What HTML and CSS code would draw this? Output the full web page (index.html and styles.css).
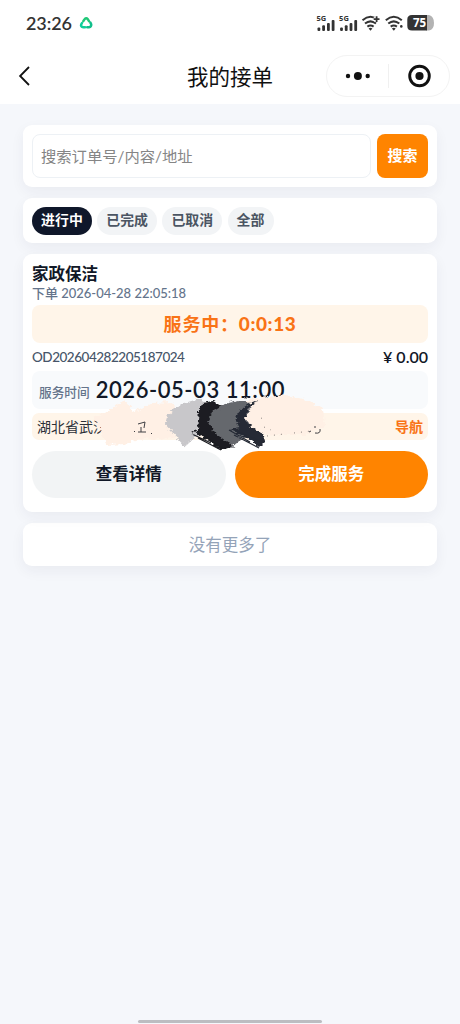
FILE: index.html
```html
<!DOCTYPE html>
<html lang="zh-CN">
<head>
<meta charset="utf-8">
<meta name="viewport" content="width=device-width, initial-scale=1">
<title>我的接单</title>
<link rel="stylesheet" href="styles.css">
</head>
<body>
<header class="top">
  <div class="status">
    <span class="clock">23:26</span>
    <svg class="status-app" width="14" height="14" viewBox="0 0 14 14" fill="none" stroke-width="2.5" stroke-linecap="round">
      <path d="M4.3 5.2 5.3 3.600Q7 1.2 8.900 3.400L10 5.200" stroke="#20c878"/>
      <path d="M11.400 6.6 12.200 8.3Q12.6 10.8 10 11.200H8.2" stroke="#12bf8b"/>
      <path d="M6 11.200H4.300Q1.4 10.8 2.2 8.4L3 7" stroke="#0fcf9a"/>
    </svg>
    <svg class="status-icons" width="120" height="20" viewBox="0 0 120 20">
      <g id="cell" fill="#333">
        <text x="1.500" y="8" class="net">5G</text>
        <rect x="2.500" y="14.500" width="2.8" height="3.500" rx="1"/><rect x="7.2" y="12.3" width="2.8" height="5.7" rx="1"/><rect x="12" y="10" width="2.8" height="8" rx="1"/><rect x="16.700" y="7" width="2.8" height="11" rx="1"/>
      </g>
      <use href="#cell" x="22.6"/>
      <g id="wifi" fill="none" stroke="#333" stroke-width="2">
        <path d="M47.500 7.2Q55.5 .3 63.5 7.2M50 10.6Q55.5 6.1 61 10.6M52.4 13.6Q55.5 11.3 58.6 13.6"/><path d="M53.6 15.4Q55.5 14.2 57.4 15.4L55.5 17.8Z" fill="#333" stroke="none"/>
      </g>
      <path d="M58.7 6.2H64.500M61.6 3.3V9.1" stroke="#fff" stroke-width="4"/>
      <path d="M58.7 6.2H64.500M61.6 3.3V9.1" stroke="#333" stroke-width="1.8"/>
      <use href="#wifi" x="23.3"/>
      <circle cx="86.300" cy="13.4" r="1.3" fill="#333"/>
      <path d="M111 2H114Q119 3.5 119 10T114 17.500H111Z" fill="#b3b3b3"/>
      <path d="M97 2H112V17.500H97Q92.300 17.500 92.300 13V6.500Q92.300 2 97 2Z" fill="#333"/>
      <text x="98" y="14" class="battery">75</text>
    </svg>
  </div>
  <div class="nav">
    <svg class="back" width="14" height="22" viewBox="0 0 14 22" fill="none" stroke="#111" stroke-width="1.8"><path d="M11 2 2.100 11 11 20"/></svg>
    <h1>我的接单</h1>
    <div class="capsule">
      <svg width="26" height="12" viewBox="0 0 26 12" fill="#111"><circle cx="3" cy="6" r="2.200"/><circle cx="12.900" cy="6" r="4"/><circle cx="22.700" cy="6" r="2.200"/></svg>
      <i></i>
      <svg width="24" height="24" viewBox="0 0 24 24"><circle cx="12.500" cy="12" r="9.800" fill="none" stroke="#111" stroke-width="2.900"/><circle cx="12.500" cy="12" r="4.100" fill="#111"/></svg>
    </div>
  </div>
</header>
<main>
  <section class="card search">
    <div class="field">搜索订单号/内容/地址</div>
    <div class="search-btn">搜索</div>
  </section>
  <section class="card tabs">
    <span class="tab active">进行中</span><span class="tab">已完成</span><span class="tab">已取消</span><span class="tab">全部</span>
  </section>
  <section class="card order">
    <h2>家政保洁</h2>
    <p class="created">下单 2026-04-28 22:05:18</p>
    <div class="timer"><span>服务中：</span><b>0:0:13</b></div>
    <div class="number"><span>OD202604282205187024</span><b>¥ 0.00</b></div>
    <div class="appointment"><span>服务时间</span><b>2026-05-03 11:00</b></div>
    <div class="address"><span>湖北省武汉</span><b>导航</b></div>
    <div class="actions"><span class="detail">查看详情</span><span class="finish">完成服务</span></div>
    <svg class="brush" width="250" height="60" viewBox="90 392 250 60">
      <defs>
        <filter id="bristle" x="-10%" y="-10%" width="120%" height="120%">
          <feTurbulence type="fractalNoise" baseFrequency=".16 .32" numOctaves="3" seed="4" result="n"/>
          <feDisplacementMap in="SourceGraphic" in2="n" scale="7" xChannelSelector="R" yChannelSelector="G"/>
        </filter>
      </defs>
      <g filter="url(#bristle)">
        <path fill="#fff0e5" d="M94 415 108 409 124 398 134 410 153 401 172 400 185 420 180 433 160 438 145 436 125 442 107 443 102 432Z"/>
        <path fill="#fff0e5" d="M239 398 286 393 307 398 323 407 325 424 306 433 277 433 239 430Z"/>
        <path fill="#c8c7ca" d="M199 397 179 403 168 412 165 422 172 430 184 444 201 431 210 417 204 399Z"/>
        <path fill="#1b1c21" d="M213 399 202 401 199 408 197 428 191 428 208 438 221 449 229 446 237 438 237 428 230 420 236 410 221 404Z"/>
        <path fill="#65676d" d="M247 397 225 402 213 409 208 419 216 432 226 439 233 444 248 434 257 419 250 405Z"/>
        <path fill="#252a35" d="M259 398 249 402 239 409 235 418 240 426 229 428 247 436 260 446 266 440 264 433 255 426 245 419 247 407Z"/>
        <path fill="#fff0e5" d="M258 402 249 408 245 416 251 424 260 431 276 431 281 400Z"/>
      </g>
      <path fill="none" stroke="#1b1c21" stroke-width="1.200" d="M195 428 222 446M192 432 211 441M198 436 221 448"/>
      <path fill="none" stroke="#252a35" stroke-width="1.200" d="M229 428 250 440M236 429 262 440M234 433 259 446"/>
      <path fill="none" stroke="#c8c7ca" stroke-width="1" d="M176 407 185 401M176 438 185 431M184 445 194 436M184 440 198 428"/>
      <path fill="none" stroke="#65676d" stroke-width="1" d="M219 408 226 402M229 442 241 434M234 443 243 435"/>
      <path fill="none" stroke="#404044" stroke-width="1" d="M138 422 145 420 144 426M138 430h8M141 425v5M134 430 135 429M151 431l1 1M315 431Q321 432 320 427M309 430l2-1M314 425h2"/>
      <path fill="none" stroke="#6b6664" stroke-width=".8" stroke-dasharray="1 6" d="M261 416 266 418M267 434 284 432M294 431 311 429M264 425 271 428"/>
    </svg>
  </section>
  <section class="card end">没有更多了</section>
</main>
<div class="home-bar"></div>
</body>
</html>
```

FILE: styles.css
```css
* { box-sizing: border-box; }
body {
  margin: 0;
  height: 1024px;
  display: flex;
  flex-direction: column;
  background: #f5f7fb;
  color: #111827;
  font-family: Lato, "Noto Sans CJK SC", sans-serif;
  overflow: hidden;
}
h1, h2, p { margin: 0; }
.top { height: 104px; background: #fff; }
.status { height: 48px; display: flex; align-items: center; padding: 0 25px 2px 26px; }
.clock { font-size: 18px; font-weight: 600; color: #333; letter-spacing: -.1px; width: 53px; white-space: nowrap; }
.status-icons { margin-left: auto; }
.net { font: 700 7.5px "Noto Sans", sans-serif; }
.battery { font: 700 11.5px "Open Sans", sans-serif; fill: #fff; }
.nav { height: 56px; display: grid; grid-template-columns: 123px 1fr 123px; align-items: center; padding: 0 11px; }
.back { margin-left: 7px; }
h1 { font-size: 21.5px; font-weight: 400; line-height: 30px; padding-top: 1px; text-align: center; color: #111; white-space: nowrap; }
.capsule { height: 42px; width: 124px; border: 1px solid #f3f3f3; border-radius: 21px; display: grid; grid-template-columns: 61px 1px 1fr; align-items: center; justify-items: center; }
.capsule i { width: 1px; height: 24px; background: #f0f0f0; }
main { display: flex; flex-direction: column; gap: 11px; padding: 21px 23px 0; }
.card { background: #fff; border-radius: 9px; box-shadow: 0 5px 14px rgba(31, 41, 75, .055); }
.search { height: 62px; padding: 9px; display: flex; gap: 6.5px; }
.field { flex: 1; border: 1px solid #edf1f5; border-radius: 8px; padding-left: 8px; line-height: 42px; font-size: 15.3px; color: #858585; }
.search-btn { width: 51px; border-radius: 8px; background: #ff8400; color: #fff; font-size: 15px; font-weight: 700; line-height: 43px; text-align: center; }
.tabs { height: 45px; padding: 9px; display: flex; gap: 5.3px; }
.tab { height: 27.5px; padding: 0 9.1px; border-radius: 14px; background: #f2f4f6; color: #4b5563; font-size: 13.9px; font-weight: 600; line-height: 26px; }
.tab.active { background: #0f172a; color: #fff; }
.order { position: relative; height: 258px; padding: 10px 9px 9px; display: flex; flex-direction: column; }
h2 { font-size: 16.5px; line-height: 20px; font-weight: 700; }
.created { font-size: 13px; line-height: 19px; margin-bottom: 2px; color: #64748b; font-weight: 500; letter-spacing: -.01px; }
.timer { height: 38px; border-radius: 8px; background: #fff5e9; color: #f97316; display: flex; justify-content: center; align-items: center; padding-bottom: 2px; font-size: 18px; font-weight: 700; letter-spacing: .8px; }
.timer b { font-size: 19px; letter-spacing: .6px; }
.number { height: 28px; display: flex; align-items: center; justify-content: space-between; font-size: 13.5px; color: #475569; font-weight: 500; }
.number span { letter-spacing: -.48px; padding-bottom: 1px; }
.number b { color: #111827; font-size: 16px; font-weight: 600; padding-bottom: 1px; }
.appointment { height: 37.5px; border-radius: 8px; background: #f8fafc; padding: 0 7px; display: flex; align-items: center; gap: 6px; }
.appointment span { font-size: 12.7px; font-weight: 500; color: #64748b; padding-top: 3px; }
.appointment b { font-size: 22px; font-weight: 600; letter-spacing: .55px; white-space: nowrap; }
.address { height: 27px; margin-top: 4.5px; padding: 0 5px 1px; border-radius: 7px; background: #fff5e9; display: flex; align-items: center; justify-content: space-between; font-size: 14px; color: #2c3038; }
.address b { color: #f97316; }
.actions { margin-top: 10.5px; display: grid; grid-template-columns: 1fr 1fr; gap: 9px; }
.detail, .finish { height: 47.5px; border-radius: 24px; background: #f2f4f5; font-size: 16.5px; font-weight: 700; line-height: 47px; text-align: center; }
.finish { background: #ff8400; color: #fff; }
.brush { position: absolute; left: 67px; top: 139.5px; }
.end { height: 42.5px; font-size: 16.5px; line-height: 44px; text-align: center; color: #94a3b8; }
.home-bar { width: 184px; height: 3px; border-radius: 2px; background: #bcbdc1; margin: auto auto 1px; }
```
